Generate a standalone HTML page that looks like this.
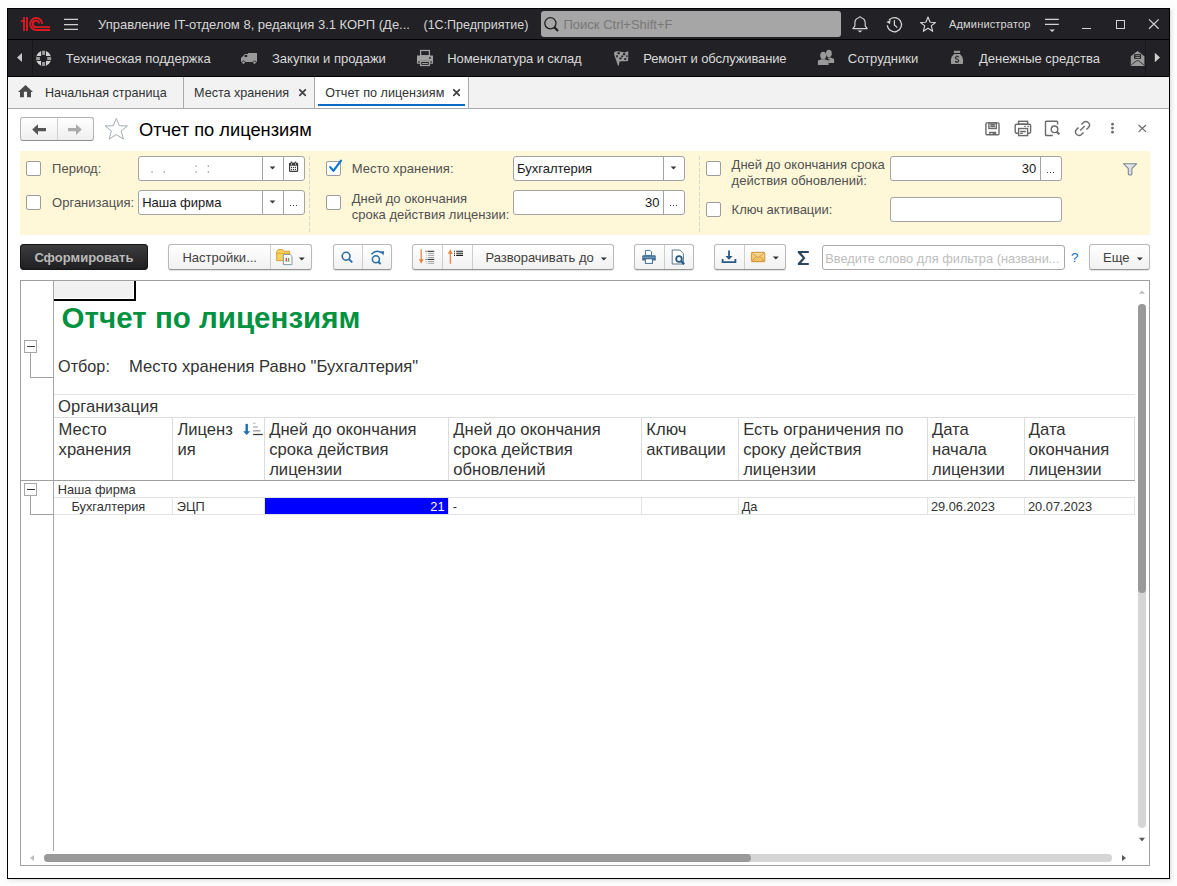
<!DOCTYPE html>
<html><head><meta charset="utf-8"><title>Отчет по лицензиям</title>
<style>
*{margin:0;padding:0;box-sizing:border-box}
html,body{width:1177px;height:886px;overflow:hidden;background:#fdfdfd;font-family:"Liberation Sans",sans-serif;font-size:13px;color:#333}
.a{position:absolute;white-space:nowrap}
svg.a{overflow:visible}
</style></head><body>
<div class="a" style="left:7px;top:8px;width:1163px;height:871px;background:#fff;border:1px solid #000;box-shadow:-1px -1px 0 0 #fff,1px 1px 0 0 rgba(0,0,0,.03),2px 2px 4px 0 rgba(0,0,0,.07),0 0 7px 1px rgba(0,0,0,.035)"></div>
<div class="a" style="left:8px;top:9px;width:1161px;height:30px;background:#222226"></div>
<div class="a" style="left:8px;top:39px;width:1161px;height:1px;background:#000"></div>
<div class="a" style="left:8px;top:40px;width:1161px;height:36px;background:#222226"></div>
<div class="a" style="left:8px;top:76px;width:1161px;height:1px;background:#000"></div>
<div class="a" style="left:8px;top:77px;width:1161px;height:31px;background:#f2f2f2"></div>
<div class="a" style="left:315px;top:77px;width:153px;height:31px;background:#fff"></div>
<div class="a" style="left:8px;top:108px;width:1161px;height:1px;background:#a9a9a9"></div>
<svg class="a" style="left:14px;top:12px;" width="40" height="24" viewBox="0 0 40 24"><g fill="none" stroke="#dc1820" stroke-width="1.85"><path d="M10 19V5M13 19V5"/><path d="M7 9H10"/><path d="M28.2 12A6 6 0 1 0 22.2 18H36"/><path d="M25.1 11.5A3.2 3.2 0 1 0 22 15.1H36"/></g></svg>
<svg class="a" style="left:62px;top:16px;" width="18" height="16" viewBox="0 0 18 16"><g stroke="#d0d0d0" stroke-width="1.25"><path d="M2 3.4H16M2 8.5H16M2 13.4H16"/></g></svg>
<div class="a" style="top:18.02px;font-size:13px;line-height:13px;color:#d6d6d6;left:98px;">Управление IT-отделом 8, редакция 3.1 КОРП (Де...</div>
<div class="a" style="top:18.969px;font-size:12.5px;line-height:12.5px;color:#d6d6d6;left:423.5px;">(1С:Предприятие)</div>
<div class="a" style="left:541px;top:11px;width:300px;height:26px;background:#a6a6a6;border-radius:3px"></div>
<svg class="a" style="left:541px;top:11px;" width="22" height="26" viewBox="0 0 22 26"><circle cx="9.4" cy="12.3" r="5.6" fill="none" stroke="#1e1e1e" stroke-width="1.3"/><path d="M13.3 16.3L17 20" stroke="#1e1e1e" stroke-width="2.2"/></svg>
<div class="a" style="top:18.02px;font-size:13px;line-height:13px;color:#777;left:563.5px;">Поиск Ctrl+Shift+F</div>
<svg class="a" style="left:850px;top:14px;" width="20" height="22" viewBox="0 0 20 22"><path d="M2.9 14.6H17.2L15.2 11.8V8.6A5.2 5.2 0 0 0 11.1 3.8A1.1 1.1 0 0 0 8.9 3.8A5.2 5.2 0 0 0 4.9 8.6V11.8Z" fill="none" stroke="#d4d4d4" stroke-width="1.15" stroke-linejoin="round"/><path d="M7.4 16.6H12.6L10 18.4Z" fill="#d4d4d4"/></svg>
<svg class="a" style="left:884px;top:14px;" width="22" height="22" viewBox="0 0 22 22"><g fill="none" stroke="#d4d4d4" stroke-width="1.25"><path d="M4.9 6.1A7.1 7.1 0 1 1 3.3 11.2"/><path d="M10.4 6.3V11L13.3 13.4"/></g><path d="M2.3 7.9L6.6 5.9L6 10Z" fill="#d4d4d4"/></svg>
<svg class="a" style="left:918px;top:14px;" width="20" height="20" viewBox="0 0 20 20"><path d="M10 3L12.1 8.3L17.4 8.5L13.3 11.9L14.7 17.3L10 14.3L5.3 17.3L6.7 11.9L2.6 8.5L7.9 8.3Z" fill="none" stroke="#d4d4d4" stroke-width="1.15" stroke-linejoin="round"/></svg>
<div class="a" style="top:19.013px;font-size:11px;line-height:11px;color:#d6d6d6;letter-spacing:0.17px;left:949px;">Администратор</div>
<svg class="a" style="left:1043px;top:14px;" width="18" height="20" viewBox="0 0 18 20"><g stroke="#d4d4d4" stroke-width="1.3"><path d="M2 5.4H15.8M2 10.4H15.8"/></g><path d="M6.4 15.4H11.9L9.15 18Z" fill="#d4d4d4"/></svg>
<div class="a" style="left:1082px;top:27.6px;width:9px;height:1.3px;background:#d4d4d4"></div>
<div class="a" style="left:1116px;top:20px;width:9px;height:9px;border:1.3px solid #d4d4d4"></div>
<svg class="a" style="left:1147px;top:17px;" width="14" height="14" viewBox="0 0 14 14"><path d="M2 2.4L11.7 11.8M11.7 2.4L2 11.8" stroke="#d4d4d4" stroke-width="1.2"/></svg>
<svg class="a" style="left:14px;top:50px;" width="12" height="16" viewBox="0 0 12 16"><path d="M3 7.5L8 3V12Z" fill="#c8c8c8"/></svg>
<div class="a" style="left:32px;top:40px;width:1px;height:36px;background:#18181b"></div>
<svg class="a" style="left:35px;top:50px;" width="18" height="18" viewBox="0 0 18 18"><clipPath id="lb"><circle cx="8.6" cy="8.4" r="7.6"/></clipPath><g clip-path="url(#lb)"><rect width="18" height="18" fill="#d2d2d2"/><rect x="6.1" y="0" width="4.9" height="18" fill="#222226"/><rect x="0" y="6" width="18" height="4.9" fill="#222226"/><g fill="#9c9c9c"><rect x="7.1" y="0.5" width="3" height="4.4"/><rect x="7.1" y="12" width="3" height="4.4"/><rect x="0.5" y="7" width="4.4" height="3"/><rect x="12.2" y="7" width="4.4" height="3"/></g></g></svg>
<div class="a" style="top:52.02px;font-size:13px;line-height:13px;color:#d9d9d9;left:65.8px;">Техническая поддержка</div>
<svg class="a" style="left:236px;top:46px;" width="28" height="24" viewBox="0 0 28 24"><path d="M5 12L9 8H12V7H21V16H5Z" fill="#999"/><rect x="8.6" y="9" width="2.6" height="2" fill="#222226"/><circle cx="7.5" cy="16.6" r="1.7" fill="#999" stroke="#222226" stroke-width="0.8"/><circle cx="18.5" cy="16.6" r="1.7" fill="#999" stroke="#222226" stroke-width="0.8"/></svg>
<div class="a" style="top:52.02px;font-size:13px;line-height:13px;color:#d9d9d9;left:272px;">Закупки и продажи</div>
<svg class="a" style="left:410px;top:46px;" width="30" height="24" viewBox="0 0 30 24"><rect x="10.6" y="4.5" width="8.8" height="5.2" fill="none" stroke="#a0a0a0" stroke-width="1.3"/><path d="M7 9.5H23V17.8H19.6V14.8H10.4V17.8H7Z" fill="#a0a0a0"/><rect x="10.6" y="15.3" width="8.8" height="4.2" fill="none" stroke="#a0a0a0" stroke-width="1.3"/><rect x="12.2" y="17" width="5.6" height="1" fill="#a0a0a0"/><rect x="19.2" y="11.2" width="1.6" height="1.6" fill="#222226"/><rect x="8.2" y="15.3" width="1.5" height="1.4" fill="#222226"/><rect x="20.3" y="15.3" width="1.5" height="1.4" fill="#222226"/></svg>
<div class="a" style="top:52.02px;font-size:13px;line-height:13px;color:#d9d9d9;letter-spacing:-0.11px;left:447.3px;">Номенклатура и склад</div>
<svg class="a" style="left:606px;top:46px;" width="30" height="24" viewBox="0 0 30 24"><path d="M8 6.5C10 4.6 13 5 16 6C18.5 6.8 20.5 6.4 22.2 5V14.8C20.5 15.2 18 15.5 15.5 15.3L13.5 15.6L12.8 19.8L11.8 19.2L10.3 14.5C9.2 12 8 9.3 8 6.5Z" fill="#9c9c9c"/><g fill="#222226"><rect x="11.5" y="6.2" width="2.3" height="2"/><rect x="17" y="7.2" width="2.3" height="2"/><rect x="10.2" y="9.2" width="1.6" height="2.2"/><rect x="15.3" y="9.5" width="1.8" height="1.8"/><rect x="20.2" y="9.2" width="1.2" height="2"/><rect x="13.4" y="11.5" width="2.2" height="1.8"/><rect x="18.2" y="12.2" width="2" height="1.8"/></g></svg>
<div class="a" style="top:52.02px;font-size:13px;line-height:13px;color:#d9d9d9;letter-spacing:-0.13px;left:643.2px;">Ремонт и обслуживание</div>
<svg class="a" style="left:810px;top:46px;" width="30" height="24" viewBox="0 0 30 24"><g fill="#999"><ellipse cx="18.9" cy="7.4" rx="2.9" ry="3.6"/><path d="M17.6 11.5H20.6L24.1 13V17H18.2V13.6Z"/><ellipse cx="13.2" cy="9.4" rx="3" ry="3.6"/><path d="M7.9 14.5L11.6 13.2H14.8L18.6 14.5V19H7.9Z"/></g><path d="M16.2 12.6L19.6 14" stroke="#222226" stroke-width="0.9"/></svg>
<div class="a" style="top:52.02px;font-size:13px;line-height:13px;color:#d9d9d9;left:847.8px;">Сотрудники</div>
<svg class="a" style="left:940px;top:44px;" width="30" height="28" viewBox="0 0 30 28"><rect x="13.9" y="6.8" width="6.2" height="2.1" fill="#999"/><path d="M11.1 19.9L10.9 16.3Q11.3 12.3 14 10.1H20Q22.7 12.3 23.1 16.3L22.9 19.9Z" fill="#999"/><path d="M18.9 13.3Q18.4 12.5 17 12.5Q15.4 12.5 15.4 13.8Q15.4 15 17 15.2Q18.7 15.4 18.7 16.7Q18.7 18 17 18Q15.6 18 15.1 17.1M17 11.4V12.5M17 18V19" fill="none" stroke="#26262a" stroke-width="1.15"/></svg>
<div class="a" style="top:52.02px;font-size:13px;line-height:13px;color:#d9d9d9;left:979px;">Денежные средства</div>
<svg class="a" style="left:1128px;top:46px;" width="18" height="22" viewBox="0 0 18 22"><path d="M2.8 10.2L9.6 5L16.4 10.2V20H2.8Z" fill="#9a9a9a"/><rect x="6.1" y="8.2" width="7" height="4.6" fill="#222226"/><rect x="7.4" y="9.2" width="4.6" height="1" fill="#8a8a8a"/><rect x="7.4" y="11" width="4.6" height="1" fill="#8a8a8a"/><path d="M3.2 19L8.5 14.8H10.8L16 19" fill="none" stroke="#222226" stroke-width="0.8"/></svg>
<div class="a" style="left:1145px;top:40px;width:1px;height:36px;background:#18181b"></div>
<svg class="a" style="left:1150px;top:50px;" width="14" height="16" viewBox="0 0 14 16"><path d="M4.8 2.8L10 7.5L4.8 12.2Z" fill="#d0d0d0"/></svg>
<svg class="a" style="left:16px;top:82px;" width="20" height="18" viewBox="0 0 20 18"><path d="M9.5 2.9L17 10H15V15.2H11V9.7H7.9V15.2H4V10H2Z" fill="#4a4a4a"/></svg>
<div class="a" style="top:86.934px;font-size:12.6px;line-height:12.6px;color:#333;left:44.9px;">Начальная страница</div>
<div class="a" style="left:183px;top:77px;width:1px;height:31px;background:#a9a9a9"></div>
<div class="a" style="top:86.934px;font-size:12.6px;line-height:12.6px;color:#333;left:194px;">Места хранения</div>
<svg class="a" style="left:297px;top:87px;" width="11" height="11" viewBox="0 0 11 11"><path d="M2.8 2.8L8.3 8.3M8.3 2.8L2.8 8.3" stroke="#444" stroke-width="1.75" stroke-linecap="round"/></svg>
<div class="a" style="left:314px;top:77px;width:1px;height:31px;background:#a9a9a9"></div>
<div class="a" style="top:86.934px;font-size:12.6px;line-height:12.6px;color:#333;left:325.3px;">Отчет по лицензиям</div>
<svg class="a" style="left:451px;top:87px;" width="11" height="11" viewBox="0 0 11 11"><path d="M2.8 2.8L8.3 8.3M8.3 2.8L2.8 8.3" stroke="#444" stroke-width="1.75" stroke-linecap="round"/></svg>
<div class="a" style="left:468px;top:77px;width:1px;height:31px;background:#a9a9a9"></div>
<div class="a" style="left:318px;top:104px;width:147px;height:2px;background:#0a6cc4"></div>
<div class="a" style="left:20px;top:117px;width:74px;height:24px;border:1px solid #b3b3b3;border-bottom-color:#8f8f8f;border-radius:3px;background:linear-gradient(#fff,#eeeeee)"></div>
<div class="a" style="left:57px;top:118px;width:1px;height:22px;background:#d0d0d0"></div>
<svg class="a" style="left:30px;top:120px;" width="20" height="18" viewBox="0 0 20 18"><path d="M2.2 9.6L8 4.3V8H16V11.2H8V15Z" fill="#555"/></svg>
<svg class="a" style="left:66px;top:120px;" width="20" height="18" viewBox="0 0 20 18"><path d="M15.8 9.6L10 4.3V8H2V11.2H10V15Z" fill="#aaa"/></svg>
<svg class="a" style="left:103px;top:117px;" width="26" height="24" viewBox="0 0 26 24"><path d="M13.30 1.4L16.35 8.72L24.53 8.94L18.21 13.95L20.39 22.02L13.30 17.55L6.21 22.02L8.39 13.95L2.07 8.94L10.25 8.72Z" fill="none" stroke="#a3abb3" stroke-width="1"/></svg>
<div class="a" style="top:120.984px;font-size:18.3px;line-height:18.3px;color:#000;left:139px;">Отчет по лицензиям</div>
<svg class="a" style="left:980px;top:116px;" width="56" height="26" viewBox="0 0 56 26"><g fill="none" stroke="#6a6a6a" stroke-width="1.4"><rect x="5.9" y="6.9" width="13.1" height="11.9" rx="1"/><rect x="8.9" y="6.9" width="7.4" height="5.6"/><path d="M10.3 8.7H14.9M10.3 10.5H14.9"/><path d="M9.8 18.8V16.5H15.5V18.8"/><rect x="38.6" y="5.3" width="9" height="2.9"/><path d="M38.3 17.2H36.6A1.4 1.4 0 0 1 35.2 15.8V9.6A1.4 1.4 0 0 1 36.6 8.2H49.2A1.4 1.4 0 0 1 50.6 9.6V15.8A1.4 1.4 0 0 1 49.2 17.2H47.6"/><rect x="38.6" y="12.5" width="9" height="7.1"/><path d="M40.2 15.5H45.9M40.2 17.4H42.8M44.2 10.4H45.7M47.3 10.4H48.8"/></g><rect x="12.6" y="16.2" width="2.9" height="2.6" fill="#6a6a6a"/></svg>
<svg class="a" style="left:1040px;top:116px;" width="56" height="26" viewBox="0 0 56 26"><g fill="none" stroke="#6a6a6a" stroke-width="1.4"><path d="M17.6 8.6V6A0.8 0.8 0 0 0 16.8 5.2H6.3A0.8 0.8 0 0 0 5.5 6V18.7A0.8 0.8 0 0 0 6.3 19.5H12.8"/><circle cx="14.5" cy="13.3" r="3.3"/><path d="M41.4 8.6L43.5 6.5A3.54 3.54 0 0 1 48.5 11.5L46.4 13.6"/><path d="M38.5 11.4L36.5 13.5A3.54 3.54 0 0 0 41.5 18.5L43.5 16.4"/><path d="M40.2 14.5L44.7 10"/></g><path d="M16.6 15.7L19.3 18.3" stroke="#6a6a6a" stroke-width="2.2"/></svg>
<svg class="a" style="left:1106px;top:118px;" width="12" height="20" viewBox="0 0 12 20"><g fill="#6a6a6a"><circle cx="6.5" cy="6.2" r="1.4"/><circle cx="6.5" cy="10.1" r="1.4"/><circle cx="6.5" cy="14.2" r="1.4"/></g></svg>
<svg class="a" style="left:1134px;top:120px;" width="16" height="16" viewBox="0 0 16 16"><path d="M4.6 5L12 11.9M12 5L4.6 11.9" stroke="#6a6a6a" stroke-width="1.2"/></svg>
<div class="a" style="left:20px;top:151px;width:1130px;height:84px;background:#fef8d9"></div>
<div class="a" style="left:26px;top:161px;width:15px;height:15px;background:#fff;border:1px solid #9c9c9c;border-radius:2px"></div>
<div class="a" style="top:162.02px;font-size:13px;line-height:13px;color:#505050;left:52.1px;">Период:</div>
<div class="a" style="left:26px;top:195px;width:15px;height:15px;background:#fff;border:1px solid #9c9c9c;border-radius:2px"></div>
<div class="a" style="top:196.02px;font-size:13px;line-height:13px;color:#505050;left:52.1px;">Организация:</div>
<div class="a" style="left:138px;top:156px;width:167px;height:25px;background:#fff;border:1px solid #a3a3a3;border-radius:3px"></div>
<div class="a" style="left:262px;top:157px;width:1px;height:23px;background:#a3a3a3"></div>
<div class="a" style="left:283px;top:157px;width:1px;height:23px;background:#a3a3a3"></div>
<svg class="a" style="left:268px;top:164.6px;" width="10" height="6" viewBox="0 0 10 6"><path d="M1.6 1.4H7.4L4.5 4.5Z" fill="#3a3a3a"/></svg>
<svg class="a" style="left:287px;top:160px;" width="14" height="14" viewBox="0 0 14 14"><rect x="2.6" y="3.4" width="8" height="8" rx="0.6" fill="#fff" stroke="#3c3c3c" stroke-width="1.2"/><rect x="2.2" y="3" width="8.8" height="2.7" fill="#3c3c3c"/><g fill="#3c3c3c"><circle cx="4.5" cy="2.5" r="0.9"/><circle cx="8.5" cy="2.5" r="0.9"/><circle cx="4.5" cy="7.45" r="0.65"/><circle cx="6.5" cy="7.45" r="0.65"/><circle cx="8.5" cy="7.45" r="0.65"/><circle cx="4.5" cy="9.5" r="0.65"/><circle cx="6.5" cy="9.5" r="0.65"/><circle cx="8.5" cy="9.5" r="0.65"/></g><circle cx="4.5" cy="3.9" r="0.55" fill="#fff"/><circle cx="8.5" cy="3.9" r="0.55" fill="#fff"/></svg>
<svg class="a" style="left:145px;top:160px;" width="70" height="16" viewBox="0 0 70 16"><g fill="#8c8c8c"><rect x="6.4" y="11.4" width="1.3" height="1.3"/><rect x="18.6" y="11.4" width="1.3" height="1.3"/><rect x="50.5" y="5.5" width="1.3" height="1.3"/><rect x="50.5" y="11.4" width="1.3" height="1.3"/><rect x="62.7" y="5.5" width="1.3" height="1.3"/><rect x="62.7" y="11.4" width="1.3" height="1.3"/></g></svg>
<div class="a" style="left:138px;top:190px;width:167px;height:25px;background:#fff;border:1px solid #a3a3a3;border-radius:3px"></div>
<div class="a" style="left:262px;top:191px;width:1px;height:23px;background:#a3a3a3"></div>
<div class="a" style="left:283px;top:191px;width:1px;height:23px;background:#a3a3a3"></div>
<svg class="a" style="left:268px;top:198.6px;" width="10" height="6" viewBox="0 0 10 6"><path d="M1.6 1.4H7.4L4.5 4.5Z" fill="#3a3a3a"/></svg>
<div class="a" style="left:290px;top:204.9px;width:1.2px;height:1.2px;background:#3a3a3a"></div>
<div class="a" style="left:293px;top:204.9px;width:1.2px;height:1.2px;background:#3a3a3a"></div>
<div class="a" style="left:296px;top:204.9px;width:1.2px;height:1.2px;background:#3a3a3a"></div>
<div class="a" style="top:196.02px;font-size:13px;line-height:13px;color:#1a1a1a;left:142.2px;">Наша фирма</div>
<div class="a" style="left:309px;top:156px;width:1px;height:76px;background:repeating-linear-gradient(#d6d6d6 0 4px,transparent 4px 6px)"></div>
<div class="a" style="left:699px;top:156px;width:1px;height:76px;background:repeating-linear-gradient(#d6d6d6 0 4px,transparent 4px 6px)"></div>
<div class="a" style="left:326px;top:161px;width:15px;height:15px;background:#fff;border:1px solid #9c9c9c;border-radius:2px"></div>
<svg class="a" style="left:324px;top:157px;" width="20" height="20" viewBox="0 0 20 20"><path d="M6.2 10.1L9.4 13.9L17 3.7" fill="none" stroke="#0b77cf" stroke-width="2.2" stroke-linecap="round" stroke-linejoin="round"/></svg>
<div class="a" style="top:162.02px;font-size:13px;line-height:13px;color:#505050;left:351.7px;">Место хранения:</div>
<div class="a" style="left:326px;top:195px;width:15px;height:15px;background:#fff;border:1px solid #9c9c9c;border-radius:2px"></div>
<div class="a" style="top:192.02px;font-size:13px;line-height:13px;color:#505050;left:351.7px;">Дней до окончания</div>
<div class="a" style="top:208.02px;font-size:13px;line-height:13px;color:#505050;left:351.7px;">срока действия лицензии:</div>
<div class="a" style="left:513px;top:156px;width:172px;height:25px;background:#fff;border:1px solid #a3a3a3;border-radius:3px"></div>
<div class="a" style="left:663px;top:157px;width:1px;height:23px;background:#a3a3a3"></div>
<svg class="a" style="left:669px;top:164.6px;" width="10" height="6" viewBox="0 0 10 6"><path d="M1.6 1.4H7.4L4.5 4.5Z" fill="#3a3a3a"/></svg>
<div class="a" style="top:162.02px;font-size:13px;line-height:13px;color:#1a1a1a;left:517px;">Бухгалтерия</div>
<div class="a" style="left:513px;top:190px;width:172px;height:25px;background:#fff;border:1px solid #a3a3a3;border-radius:3px"></div>
<div class="a" style="left:663px;top:191px;width:1px;height:23px;background:#a3a3a3"></div>
<div class="a" style="top:196.02px;font-size:13px;line-height:13px;color:#1a1a1a;right:517.6px;text-align:right;">30</div>
<div class="a" style="left:670px;top:204.9px;width:1.2px;height:1.2px;background:#3a3a3a"></div>
<div class="a" style="left:673px;top:204.9px;width:1.2px;height:1.2px;background:#3a3a3a"></div>
<div class="a" style="left:676px;top:204.9px;width:1.2px;height:1.2px;background:#3a3a3a"></div>
<div class="a" style="left:706px;top:161px;width:15px;height:15px;background:#fff;border:1px solid #9c9c9c;border-radius:2px"></div>
<div class="a" style="top:158.02px;font-size:13px;line-height:13px;color:#505050;left:731.6px;">Дней до окончания срока</div>
<div class="a" style="top:174.02px;font-size:13px;line-height:13px;color:#505050;left:731.6px;">действия обновлений:</div>
<div class="a" style="left:706px;top:202px;width:15px;height:15px;background:#fff;border:1px solid #9c9c9c;border-radius:2px"></div>
<div class="a" style="top:203.02px;font-size:13px;line-height:13px;color:#505050;left:731.6px;">Ключ активации:</div>
<div class="a" style="left:890px;top:156px;width:172px;height:25px;background:#fff;border:1px solid #a3a3a3;border-radius:3px"></div>
<div class="a" style="left:1040px;top:157px;width:1px;height:23px;background:#a3a3a3"></div>
<div class="a" style="top:162.02px;font-size:13px;line-height:13px;color:#1a1a1a;right:140.70000000000005px;text-align:right;">30</div>
<div class="a" style="left:1047px;top:171.9px;width:1.2px;height:1.2px;background:#3a3a3a"></div>
<div class="a" style="left:1050px;top:171.9px;width:1.2px;height:1.2px;background:#3a3a3a"></div>
<div class="a" style="left:1053px;top:171.9px;width:1.2px;height:1.2px;background:#3a3a3a"></div>
<div class="a" style="left:890px;top:197px;width:172px;height:25px;background:#fff;border:1px solid #a3a3a3;border-radius:3px"></div>
<svg class="a" style="left:1120px;top:160px;" width="20" height="18" viewBox="0 0 20 18"><defs><linearGradient id="fun" x1="0" y1="0" x2="1" y2="1"><stop offset="0" stop-color="#eef0f3"/><stop offset="1" stop-color="#c9d0d8"/></linearGradient></defs><path d="M3.5 3.7H16.7L11.9 8.6V14A0.9 0.9 0 0 1 11 14.9H9.2A0.9 0.9 0 0 1 8.3 14V8.6Z" fill="url(#fun)" stroke="#7a858d" stroke-width="1.05" stroke-linejoin="round"/></svg>
<div class="a" style="left:20px;top:244px;width:128px;height:26px;border-radius:3px;background:linear-gradient(#3c3c3e,#1f1f21);border:1px solid #151515"></div>
<div class="a" style="top:251.02px;font-size:13px;line-height:13px;color:#bababa;font-weight:bold;left:34.4px;">Сформировать</div>
<div class="a" style="left:168px;top:244px;width:144px;height:26px;border:1px solid #b9b9b9;border-bottom-color:#959595;border-radius:3px;background:linear-gradient(#ffffff,#f1f1f1);box-shadow:0 1px 1px rgba(0,0,0,.12)"></div>
<div class="a" style="left:270px;top:245px;width:1px;height:24px;background:#cdcdcd"></div>
<div class="a" style="top:251.02px;font-size:13px;line-height:13px;color:#404040;left:182.4px;">Настройки...</div>
<svg class="a" style="left:270px;top:244px;" width="42" height="26" viewBox="0 0 42 26"><path d="M6.6 16.6V7.6L8.2 5.5H12.4L13.6 7.2H19.6V16.6Z" fill="#f7d35c" stroke="#d59a2c" stroke-width="0.9" stroke-linejoin="round"/><path d="M6.6 9.3H19.6" stroke="#d59a2c" stroke-width="0.7"/><path d="M13.4 10.5H20.2L22 12.3V20.6H13.4Z" fill="#fff" stroke="#7d8d9b" stroke-width="0.9" stroke-linejoin="round"/><rect x="15.6" y="14" width="1.3" height="3.2" fill="#e8302c"/><rect x="17.9" y="14" width="1.3" height="3.2" fill="#3fae49"/><path d="M15 17.6H20.2" stroke="#999" stroke-width="0.5"/></svg>
<svg class="a" style="left:297px;top:255.5px;" width="10" height="6" viewBox="0 0 10 6"><path d="M1.8 1.5H7.8L4.8 4.6Z" fill="#333"/></svg>
<div class="a" style="left:333px;top:244px;width:59px;height:26px;border:1px solid #b9b9b9;border-bottom-color:#959595;border-radius:3px;background:linear-gradient(#ffffff,#f1f1f1);box-shadow:0 1px 1px rgba(0,0,0,.12)"></div>
<div class="a" style="left:362px;top:245px;width:1px;height:24px;background:#cdcdcd"></div>
<svg class="a" style="left:337px;top:248px;" width="20" height="20" viewBox="0 0 20 20"><circle cx="9.1" cy="8.2" r="3.9" fill="none" stroke="#2b6ea6" stroke-width="1.6"/><path d="M11.9 11.1L15.2 14.4" stroke="#2b6ea6" stroke-width="2"/></svg>
<svg class="a" style="left:367px;top:248px;" width="20" height="20" viewBox="0 0 20 20"><circle cx="8.9" cy="11.3" r="3.5" fill="none" stroke="#2b6ea6" stroke-width="1.6"/><path d="M11.3 13.8L13.6 16" stroke="#2b6ea6" stroke-width="1.9"/><path d="M4.4 6.2Q9.5 0.8 14.8 5" fill="none" stroke="#2b6ea6" stroke-width="1.5"/><path d="M13.2 3.2L17.2 3.2L16.4 7.4Z" fill="#2b6ea6"/></svg>
<div class="a" style="left:412px;top:244px;width:202px;height:26px;border:1px solid #b9b9b9;border-bottom-color:#959595;border-radius:3px;background:linear-gradient(#ffffff,#f1f1f1);box-shadow:0 1px 1px rgba(0,0,0,.12)"></div>
<div class="a" style="left:442px;top:245px;width:1px;height:24px;background:#cdcdcd"></div>
<div class="a" style="left:472px;top:245px;width:1px;height:24px;background:#cdcdcd"></div>
<svg class="a" style="left:412px;top:244px;" width="30" height="26" viewBox="0 0 30 26"><path d="M9.2 5.2V17.5" stroke="#ef7d32" stroke-width="1.2"/><path d="M6.9 15.2L9.2 19.8L11.5 15.2Z" fill="#ef7d32"/><g stroke="#222" stroke-width="1"><path d="M13.5 7.3H14.5M15.5 7.3H22.2M13.5 15.4H14.5M15.5 15.4H22.2"/></g><g stroke="#9a9a9a" stroke-width="0.9"><path d="M14.5 9.4H15.2M16.2 9.4H22.2M14.5 11.4H15.2M16.2 11.4H22.2M14.5 13.5H15.2M16.2 13.5H22.2M14.5 17.5H15.2M16.2 17.5H22.2M14.5 19.3H15.2M16.2 19.3H22.2"/></g></svg>
<svg class="a" style="left:442px;top:244px;" width="30" height="26" viewBox="0 0 30 26"><path d="M8.3 8V19.8" stroke="#ef7d32" stroke-width="1.2"/><path d="M6 9.8L8.3 5.2L10.6 9.8Z" fill="#ef7d32"/><g stroke="#1a1a1a" stroke-width="1.1"><path d="M12 7.3H13M14.2 7.3H21M12 9.2H13M14.2 9.2H21M12 11.4H13M14.2 11.4H21"/></g></svg>
<div class="a" style="top:251.02px;font-size:13px;line-height:13px;color:#404040;left:485.4px;">Разворачивать до</div>
<svg class="a" style="left:599px;top:255.5px;" width="10" height="6" viewBox="0 0 10 6"><path d="M1.8 1.5H7.8L4.8 4.6Z" fill="#333"/></svg>
<div class="a" style="left:634px;top:244px;width:60px;height:26px;border:1px solid #b9b9b9;border-bottom-color:#959595;border-radius:3px;background:linear-gradient(#ffffff,#f1f1f1);box-shadow:0 1px 1px rgba(0,0,0,.12)"></div>
<div class="a" style="left:664px;top:245px;width:1px;height:24px;background:#cdcdcd"></div>
<svg class="a" style="left:638px;top:247px;" width="22" height="20" viewBox="0 0 22 20"><path d="M7.4 3.4H12L13.6 5V8.4H7.4Z" fill="#fff" stroke="#4a7398" stroke-width="1"/><path d="M5.2 8.2H16.8A1 1 0 0 1 17.8 9.2V13.6H4.2V9.2A1 1 0 0 1 5.2 8.2Z" fill="#3f6d96"/><rect x="4.2" y="9.6" width="13.6" height="1.4" fill="#6e93b5"/><rect x="7.4" y="11.8" width="7" height="4.6" fill="#fff" stroke="#3f6d96" stroke-width="1"/></svg>
<svg class="a" style="left:668px;top:247px;" width="22" height="20" viewBox="0 0 22 20"><path d="M4.2 3H11.8L15.4 6.6V17H4.2Z" fill="#fff" stroke="#5a7890" stroke-width="1"/><circle cx="11" cy="12" r="2.8" fill="none" stroke="#2a5b87" stroke-width="1.8"/><path d="M13 14L16.2 17.2" stroke="#2a5b87" stroke-width="2.2"/></svg>
<div class="a" style="left:714px;top:244px;width:72px;height:26px;border:1px solid #b9b9b9;border-bottom-color:#959595;border-radius:3px;background:linear-gradient(#ffffff,#f1f1f1);box-shadow:0 1px 1px rgba(0,0,0,.12)"></div>
<div class="a" style="left:744px;top:245px;width:1px;height:24px;background:#cdcdcd"></div>
<svg class="a" style="left:718px;top:247px;" width="22" height="20" viewBox="0 0 22 20"><path d="M11 3.5V11" stroke="#2a5b87" stroke-width="1.8"/><path d="M7.3 9L11 12.8L14.7 9Z" fill="#2a5b87"/><path d="M4.6 12V15.2H17.4V12" fill="none" stroke="#2a5b87" stroke-width="1.8"/></svg>
<svg class="a" style="left:748px;top:247px;" width="20" height="20" viewBox="0 0 20 20"><defs><linearGradient id="env" x1="0" y1="0" x2="0" y2="1"><stop offset="0" stop-color="#f9dc96"/><stop offset="1" stop-color="#efb95a"/></linearGradient></defs><rect x="3.4" y="5.3" width="13.4" height="9.4" rx="1" fill="url(#env)" stroke="#c98a2a" stroke-width="0.9"/><path d="M3.8 5.8L10.1 10.8L16.4 5.8M3.8 14.2L8.4 9.6M16.4 14.2L11.8 9.6" fill="none" stroke="#c98a2a" stroke-width="0.7"/></svg>
<svg class="a" style="left:771px;top:255px;" width="10" height="6" viewBox="0 0 10 6"><path d="M1.8 1.5H7.8L4.8 4.6Z" fill="#333"/></svg>
<svg class="a" style="left:795px;top:248px;" width="16" height="20" viewBox="0 0 16 20"><path d="M2.8 2.9H13.8V5.1H6.3L10.4 10.1L6.3 14.9H13.8V17.1H2.8V15.3L7.6 10.1L2.8 4.7Z" fill="#2b475c"/></svg>
<div class="a" style="left:822px;top:245px;width:243px;height:25px;background:#fff;border:1px solid #a8a8a8;border-radius:3px"></div>
<div class="a" style="top:252.84px;font-size:12.8px;line-height:12.8px;color:#bdbdbd;left:825.3px;">Введите слово для фильтра (названи...</div>
<div class="a" style="top:250.997px;font-size:13.5px;line-height:13.5px;color:#1a6ab3;left:1071px;">?</div>
<div class="a" style="left:1089px;top:244px;width:61px;height:26px;border:1px solid #b9b9b9;border-bottom-color:#959595;border-radius:3px;background:linear-gradient(#ffffff,#f1f1f1);box-shadow:0 1px 1px rgba(0,0,0,.12)"></div>
<div class="a" style="top:251.02px;font-size:13px;line-height:13px;color:#404040;left:1103px;">Еще</div>
<svg class="a" style="left:1135px;top:255.5px;" width="10" height="6" viewBox="0 0 10 6"><path d="M1.8 1.5H7.8L4.8 4.6Z" fill="#333"/></svg>
<div class="a" style="left:20px;top:280px;width:1130px;height:586px;border:1px solid #a0a0a0;background:#fff"></div>
<div class="a" style="left:53px;top:281px;width:1px;height:570px;background:#a8a8a8"></div>
<div class="a" style="left:54px;top:281px;width:82px;height:20px;background:#f1f1f1;border-right:2px solid #000;border-bottom:2px solid #000;box-shadow:inset -1px -1px 0 #fff"></div>
<div class="a" style="top:303.011px;font-size:29.55px;line-height:29.55px;color:#00923f;font-weight:bold;left:61.6px;">Отчет по лицензиям</div>
<div class="a" style="left:24px;top:340px;width:13px;height:13px;border:1px solid #a6a6a6;background:#fff"></div>
<div class="a" style="left:26.5px;top:346px;width:8px;height:1px;background:#444"></div>
<div class="a" style="left:30px;top:353px;width:1px;height:25px;background:#a0a0a0"></div>
<div class="a" style="left:30px;top:377px;width:24px;height:1px;background:#a0a0a0"></div>
<div class="a" style="top:358.012px;font-size:16.2px;line-height:16.2px;color:#333;left:58.1px;">Отбор:</div>
<div class="a" style="top:358.748px;font-size:16.6px;line-height:16.6px;color:#333;left:129.1px;">Место хранения Равно "Бухгалтерия"</div>
<div class="a" style="left:54px;top:394px;width:1081px;height:1px;background:#e3e3e3"></div>
<div class="a" style="top:398.748px;font-size:16.6px;line-height:16.6px;color:#333;left:58.1px;">Организация</div>
<div class="a" style="left:54px;top:417px;width:1081px;height:1px;background:#dcdcdc"></div>
<div class="a" style="left:1134px;top:417px;width:1px;height:64px;background:#dcdcdc"></div>
<div class="a" style="left:172px;top:418px;width:1px;height:62px;background:#dcdcdc"></div>
<div class="a" style="left:264px;top:418px;width:1px;height:62px;background:#dcdcdc"></div>
<div class="a" style="left:448px;top:418px;width:1px;height:62px;background:#dcdcdc"></div>
<div class="a" style="left:641px;top:418px;width:1px;height:62px;background:#dcdcdc"></div>
<div class="a" style="left:738px;top:418px;width:1px;height:62px;background:#dcdcdc"></div>
<div class="a" style="left:927px;top:418px;width:1px;height:62px;background:#dcdcdc"></div>
<div class="a" style="left:1024px;top:418px;width:1px;height:62px;background:#dcdcdc"></div>
<div class="a" style="left:20px;top:480px;width:1115px;height:1px;background:#a0a0a0"></div>
<div class="a" style="top:421.748px;font-size:16.6px;line-height:16.6px;color:#333;left:58.6px;">Место</div>
<div class="a" style="top:441.748px;font-size:16.6px;line-height:16.6px;color:#333;left:58.6px;">хранения</div>
<div class="a" style="top:421.748px;font-size:16.6px;line-height:16.6px;color:#333;left:177.4px;">Лиценз</div>
<div class="a" style="top:441.748px;font-size:16.6px;line-height:16.6px;color:#333;left:177.4px;">ия</div>
<div class="a" style="top:421.748px;font-size:16.6px;line-height:16.6px;color:#333;left:269.2px;">Дней до окончания</div>
<div class="a" style="top:441.748px;font-size:16.6px;line-height:16.6px;color:#333;left:269.2px;">срока действия</div>
<div class="a" style="top:461.748px;font-size:16.6px;line-height:16.6px;color:#333;left:269.2px;">лицензии</div>
<div class="a" style="top:421.748px;font-size:16.6px;line-height:16.6px;color:#333;left:453.3px;">Дней до окончания</div>
<div class="a" style="top:441.748px;font-size:16.6px;line-height:16.6px;color:#333;left:453.3px;">срока действия</div>
<div class="a" style="top:461.748px;font-size:16.6px;line-height:16.6px;color:#333;left:453.3px;">обновлений</div>
<div class="a" style="top:421.748px;font-size:16.6px;line-height:16.6px;color:#333;left:646.3px;">Ключ</div>
<div class="a" style="top:441.748px;font-size:16.6px;line-height:16.6px;color:#333;left:646.3px;">активации</div>
<div class="a" style="top:421.748px;font-size:16.6px;line-height:16.6px;color:#333;left:743.2px;">Есть ограничения по</div>
<div class="a" style="top:441.748px;font-size:16.6px;line-height:16.6px;color:#333;left:743.2px;">сроку действия</div>
<div class="a" style="top:461.748px;font-size:16.6px;line-height:16.6px;color:#333;left:743.2px;">лицензии</div>
<div class="a" style="top:421.748px;font-size:16.6px;line-height:16.6px;color:#333;left:932px;">Дата</div>
<div class="a" style="top:441.748px;font-size:16.6px;line-height:16.6px;color:#333;left:932px;">начала</div>
<div class="a" style="top:461.748px;font-size:16.6px;line-height:16.6px;color:#333;left:932px;">лицензии</div>
<div class="a" style="top:421.748px;font-size:16.6px;line-height:16.6px;color:#333;left:1028.8px;">Дата</div>
<div class="a" style="top:441.748px;font-size:16.6px;line-height:16.6px;color:#333;left:1028.8px;">окончания</div>
<div class="a" style="top:461.748px;font-size:16.6px;line-height:16.6px;color:#333;left:1028.8px;">лицензии</div>
<svg class="a" style="left:240px;top:420px;" width="24" height="18" viewBox="0 0 24 18"><path d="M6.7 3.9V12" stroke="#1a6cb4" stroke-width="2.4"/><path d="M3.2 11.3H10.2L6.7 15.1Z" fill="#1a6cb4"/><g stroke-width="1.3"><path d="M13.1 3.3H15.5" stroke="#c4c4c4"/><path d="M13.1 7H17.9" stroke="#aaa"/><path d="M13.1 10.8H20.4" stroke="#999"/><path d="M13.1 14.5H22.8" stroke="#3a3a3a"/></g></svg>
<div class="a" style="left:24px;top:483px;width:13px;height:13px;border:1px solid #a6a6a6;background:#fff"></div>
<div class="a" style="left:26.5px;top:489px;width:8px;height:1.2px;background:#333"></div>
<div class="a" style="left:30px;top:496px;width:1px;height:18px;background:#a0a0a0"></div>
<div class="a" style="left:30px;top:514px;width:24px;height:1px;background:#a0a0a0"></div>
<div class="a" style="top:483.84px;font-size:12.8px;line-height:12.8px;color:#333;left:57.7px;">Наша фирма</div>
<div class="a" style="left:54px;top:497px;width:1081px;height:1px;background:#e3e3e3"></div>
<div class="a" style="left:54px;top:514px;width:1081px;height:1px;background:#e3e3e3"></div>
<div class="a" style="left:172px;top:498px;width:1px;height:16px;background:#e3e3e3"></div>
<div class="a" style="left:264px;top:498px;width:1px;height:16px;background:#e3e3e3"></div>
<div class="a" style="left:448px;top:498px;width:1px;height:16px;background:#e3e3e3"></div>
<div class="a" style="left:641px;top:498px;width:1px;height:16px;background:#e3e3e3"></div>
<div class="a" style="left:738px;top:498px;width:1px;height:16px;background:#e3e3e3"></div>
<div class="a" style="left:927px;top:498px;width:1px;height:16px;background:#e3e3e3"></div>
<div class="a" style="left:1024px;top:498px;width:1px;height:16px;background:#e3e3e3"></div>
<div class="a" style="left:1134px;top:498px;width:1px;height:16px;background:#e3e3e3"></div>
<div class="a" style="left:265px;top:498px;width:183px;height:16px;background:#0000ff"></div>
<div class="a" style="top:500.84px;font-size:12.8px;line-height:12.8px;color:#333;left:71.4px;">Бухгалтерия</div>
<div class="a" style="top:500.84px;font-size:12.8px;line-height:12.8px;color:#333;left:176.8px;">ЭЦП</div>
<div class="a" style="top:500.84px;font-size:12.8px;line-height:12.8px;color:#fff;right:732.5px;text-align:right;">21</div>
<div class="a" style="top:500.84px;font-size:12.8px;line-height:12.8px;color:#333;left:452.7px;">-</div>
<div class="a" style="top:500.84px;font-size:12.8px;line-height:12.8px;color:#333;left:741.7px;">Да</div>
<div class="a" style="top:500.84px;font-size:12.8px;line-height:12.8px;color:#333;left:930.9px;">29.06.2023</div>
<div class="a" style="top:500.84px;font-size:12.8px;line-height:12.8px;color:#333;left:1028px;">20.07.2023</div>
<svg class="a" style="left:1137px;top:287px;" width="10" height="9" viewBox="0 0 10 9"><path d="M2 6.8H8L5 3.4Z" fill="#bdbdbd"/></svg>
<div class="a" style="left:1138px;top:304px;width:8px;height:524px;background:#d5d5d5;border-radius:4px"></div>
<div class="a" style="left:1138px;top:304px;width:8px;height:289px;background:#999;border-radius:4px"></div>
<svg class="a" style="left:1137px;top:835px;" width="10" height="9" viewBox="0 0 10 9"><path d="M2 2.8H8L5 6.6Z" fill="#555"/></svg>
<svg class="a" style="left:28px;top:853px;" width="8" height="10" viewBox="0 0 8 10"><path d="M6 2L2 5L6 8Z" fill="#bdbdbd"/></svg>
<div class="a" style="left:44px;top:854px;width:1068px;height:8px;background:#d5d5d5;border-radius:4px"></div>
<div class="a" style="left:44px;top:854px;width:707px;height:8px;background:#999;border-radius:4px"></div>
<svg class="a" style="left:1120px;top:853px;" width="8" height="10" viewBox="0 0 8 10"><path d="M2 2L6 5L2 8Z" fill="#555"/></svg>
</body></html>
